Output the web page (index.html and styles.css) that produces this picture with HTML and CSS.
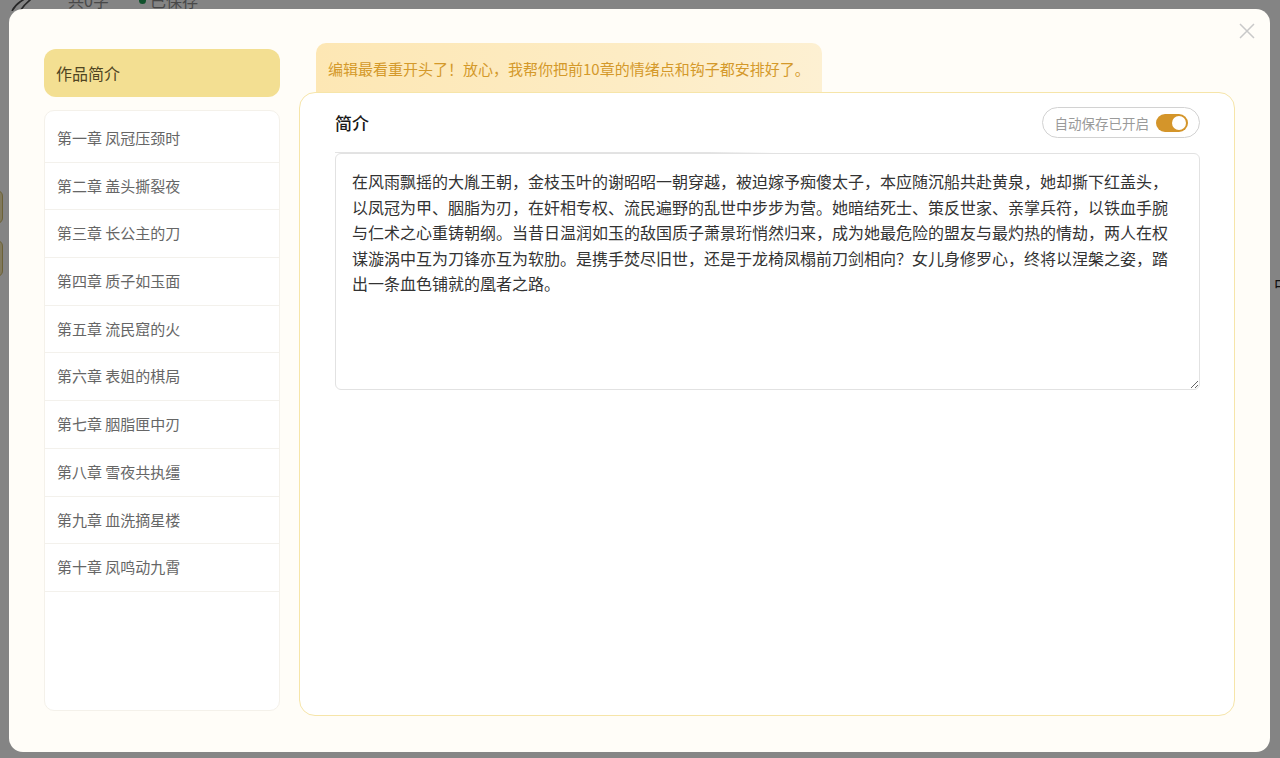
FILE: index.html
```html
<!DOCTYPE html>
<html lang="zh-CN">
<head>
<meta charset="utf-8">
<title>作品简介</title>
<link rel="stylesheet" href="styles.css">
</head>
<body>
<div class="page">
  <div class="page-top">
    <svg class="pen" width="30" height="14" viewBox="0 0 30 14"><path d="M6 14 C 10 6, 18 2, 26 -2" fill="none" stroke="#4a4a4a" stroke-width="1.6"/><path d="M14 14 C 18 8, 22 4, 28 0" fill="none" stroke="#4a4a4a" stroke-width="1.6"/></svg>
    <span class="count">共0字</span>
    <span class="saved"><i class="dot"></i>已保存</span>
  </div>
  <div class="page-body">
    <div class="page-left">
      <div class="ghost-btn"></div>
      <div class="ghost-btn tall"></div>
    </div>
    <div class="page-right">中</div>
  </div>
</div>

<div class="overlay">
  <div class="modal">
    <button class="close" aria-label="关闭">
      <svg width="16" height="16" viewBox="0 0 16 16"><path d="M1 1 L15 15 M15 1 L1 15" stroke="#c9c9c9" stroke-width="1.5" fill="none"/></svg>
    </button>
    <aside class="sidebar">
      <div class="nav-active">作品简介</div>
      <ul class="chapters">
        <li>第一章 凤冠压颈时</li>
        <li>第二章 盖头撕裂夜</li>
        <li>第三章 长公主的刀</li>
        <li>第四章 质子如玉面</li>
        <li>第五章 流民窟的火</li>
        <li>第六章 表姐的棋局</li>
        <li>第七章 胭脂匣中刃</li>
        <li>第八章 雪夜共执缰</li>
        <li>第九章 血洗摘星楼</li>
        <li>第十章 凤鸣动九霄</li>
      </ul>
    </aside>
    <main class="main">
      <div class="tip">编辑最看重开头了！放心，我帮你把前10章的情绪点和钩子都安排好了。</div>
      <section class="card">
        <div class="card-head">
          <h2 class="card-title">简介</h2>
          <div class="autosave">
            <span>自动保存已开启</span>
            <span class="switch"><i class="knob"></i></span>
          </div>
        </div>
        <div class="editor">
          <textarea class="intro">在风雨飘摇的大胤王朝，金枝玉叶的谢昭昭一朝穿越，被迫嫁予痴傻太子，本应随沉船共赴黄泉，她却撕下红盖头，以凤冠为甲、胭脂为刃，在奸相专权、流民遍野的乱世中步步为营。她暗结死士、策反世家、亲掌兵符，以铁血手腕与仁术之心重铸朝纲。当昔日温润如玉的敌国质子萧景珩悄然归来，成为她最危险的盟友与最灼热的情劫，两人在权谋漩涡中互为刀锋亦互为软肋。是携手焚尽旧世，还是于龙椅凤榻前刀剑相向？女儿身修罗心，终将以涅槃之姿，踏出一条血色铺就的凰者之路。</textarea>
        </div>
      </section>
    </main>
  </div>
</div>
</body>
</html>
```

FILE: styles.css
```css
* { box-sizing: border-box; }
html, body {
  margin: 0;
  padding: 0;
  width: 1280px;
  height: 758px;
  overflow: hidden;
  font-family: "Noto Sans CJK SC", "Noto Sans", sans-serif;
}
body { background: #ffffff; }

/* background page (under the overlay) */
.page { width: 1280px; height: 758px; background: #fbfbfb; }
.page-top {
  display: flex;
  align-items: center;
  height: 16px;
  margin-top: -8px;
  padding-left: 6px;
  font-size: 16px;
  color: #8a8a8a;
}
.pen { margin-top: 8px; }
.count { margin-left: 32px; }
.saved { margin-left: 30px; display: flex; align-items: center; gap: 4px; }
.dot { width: 7px; height: 7px; border-radius: 50%; background: #1f9a55; display: inline-block; }
.page-body { display: flex; justify-content: space-between; }
.page-left { padding-top: 182px; margin-left: -30px; display: flex; flex-direction: column; gap: 16px; }
.ghost-btn { width: 33px; height: 34px; border: 1px solid #cdb96a; border-radius: 6px; background: #f5e7b0; }
.ghost-btn.tall { height: 37px; }
.page-right { padding-top: 264px; margin-right: -10px; font-size: 16px; color: #222; }

.overlay {
  position: fixed;
  inset: 0;
  background: rgba(0, 0, 0, 0.475);
  padding: 9px 0 0 9px;
}
.modal {
  position: relative;
  width: 1261px;
  height: 743px;
  background: #fffdf8;
  border-radius: 14px;
  padding: 34px 35px 36px 35px;
  display: flex;
  gap: 19px;
}
.close {
  position: absolute;
  top: 14px;
  right: 15px;
  width: 16px;
  height: 16px;
  padding: 0;
  border: 0;
  background: none;
  display: flex;
}

.sidebar {
  width: 236px;
  flex: none;
  margin: 6px 0 5px;
  display: flex;
  flex-direction: column;
  gap: 13px;
}
.nav-active {
  height: 48px;
  border-radius: 12px;
  background: #f3df92;
  color: #4f4522;
  font-size: 16px;
  line-height: 48px;
  padding-left: 12px;
}
.chapters {
  flex: 1;
  list-style: none;
  margin: 0;
  padding: 4px 0 0;
  background: #ffffff;
  border: 1px solid #f4f1ea;
  border-radius: 10px;
}
.chapters li {
  height: 47.7px;
  padding: 0 12px;
  font-size: 15px;
  line-height: 46.7px;
  color: #666666;
  border-bottom: 1px solid #f3f1ec;
}

.main { flex: 1; display: flex; flex-direction: column; }
.tip {
  align-self: flex-start;
  width: 506px;
  margin-left: 17px;
  height: 60px;
  padding: 14px 0 0 12px;
  border-radius: 10px 10px 0 0;
  background: linear-gradient(90deg, #fde7b4 0%, #fdecc4 60%, #fdf0d2 100%);
  color: #d4992a;
  font-size: 15px;
  line-height: 23px;
  white-space: nowrap;
}
.card {
  position: relative;
  z-index: 1;
  flex: 1;
  margin-top: -11px;
  background: #ffffff;
  border: 1px solid #f6e5a9;
  border-radius: 16px;
  padding: 14px 34px 0 35px;
}
.card-head {
  height: 31px;
  display: flex;
  align-items: center;
  justify-content: space-between;
}
.card-title {
  margin: 0;
  font-size: 17px;
  font-weight: 500;
  color: #1a1a1a;
}
.autosave {
  height: 31px;
  display: flex;
  align-items: center;
  gap: 7px;
  padding: 0 11px 0 12px;
  border: 1px solid #d2d2d2;
  border-radius: 16px;
  background: #ffffff;
  font-size: 13.5px;
  color: #9a9a9a;
}
.switch {
  width: 32px;
  height: 18px;
  border-radius: 9px;
  background: #d4952a;
  display: flex;
  align-items: center;
  justify-content: flex-end;
  padding-right: 2px;
}
.knob { width: 14px; height: 14px; border-radius: 50%; background: #ffffff; display: block; }

.editor { position: relative; margin-top: 15px; }
.editor::before {
  content: "";
  position: absolute;
  left: 0;
  top: -1px;
  width: 440px;
  height: 1px;
  background: linear-gradient(90deg, #e3e3e3 85%, rgba(227,227,227,0));
}
.intro {
  display: block;
  width: 865px;
  height: 237px;
  padding: 15px 16px;
  border: 1px solid #e2e2e2;
  border-radius: 6px;
  font-family: "Noto Sans CJK SC", "Noto Sans", sans-serif;
  font-size: 16px;
  line-height: 25.5px;
  color: #333333;
  background: #ffffff;
  resize: vertical;
  outline: none;
}
```
